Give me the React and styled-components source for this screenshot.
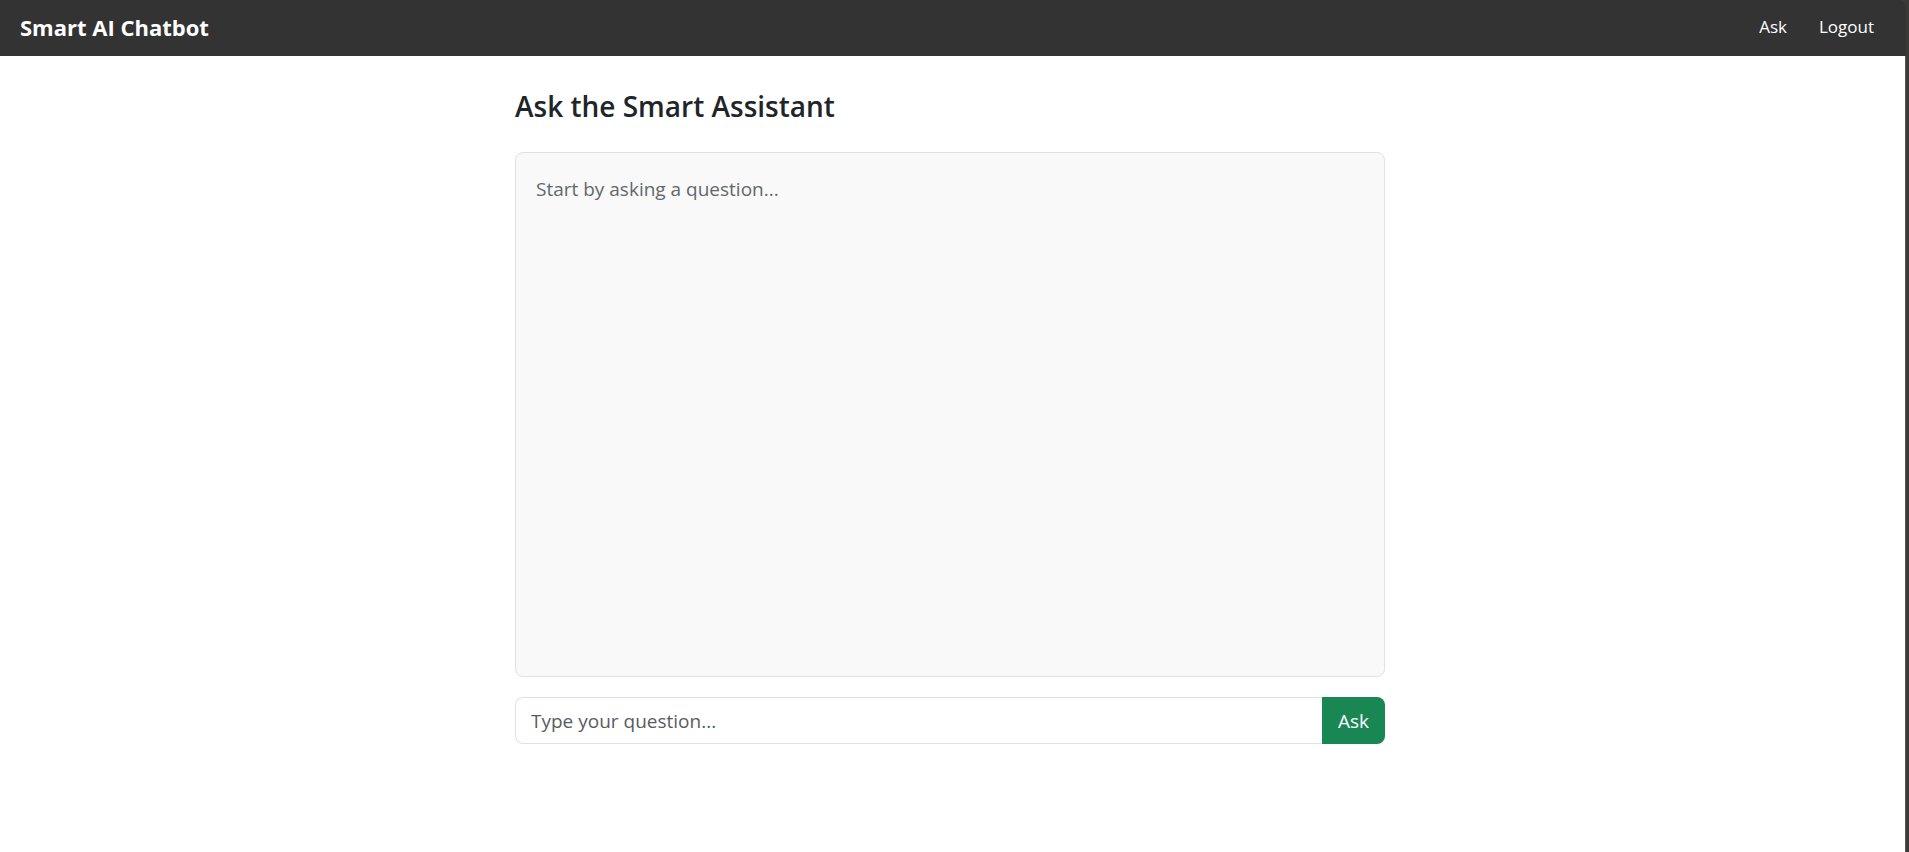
import React, { useState } from "react";
import styled, { createGlobalStyle } from "styled-components";

const GlobalStyle = createGlobalStyle`
  *, *::before, *::after { box-sizing: border-box; }
  body {
    margin: 0;
    background: #3b3a39;
    color: #212529;
    font-family: "Segoe UI", "Open Sans", "Noto Sans", sans-serif;
    font-size: 19px;
    line-height: 32px;
  }
`;

const Shell = styled.div`
  display: flex;
  flex-direction: column;
  min-height: 100vh;
  margin-right: 3px;
`;

const Navbar = styled.header`
  display: flex;
  align-items: center;
  justify-content: space-between;
  height: 56px;
  padding: 0 32px 2px 20px;
  border-top-right-radius: 8px;
  background: #333333;
`;

const Brand = styled.div`
  color: #ffffff;
  font-size: 22px;
  font-weight: 700;
`;

const NavLinks = styled.nav`
  display: flex;
  gap: 32px;
`;

const NavLink = styled.a`
  color: #ffffff;
  font-size: 17px;
  text-decoration: none;
`;

const Page = styled.main`
  flex: 1;
  padding: 32px 25px 32px 20px;
  border-right: 1px solid #5a5a5a;
  background: #ffffff;
`;

const Content = styled.div`
  max-width: 870px;
  margin: 0 auto;
`;

const Heading = styled.h1`
  margin: 0 0 28px;
  font-size: 28px;
  font-weight: 600;
  line-height: 36px;
`;

const ChatBox = styled.section`
  height: 525px;
  margin-bottom: 20px;
  padding: 20px;
  overflow-y: auto;
  border: 1px solid #dee2e6;
  border-radius: 8px;
  background: #f9f9f9;
`;

const Hint = styled.p`
  margin: 0;
  color: #63676b;
`;

const AskForm = styled.form`
  display: flex;
  height: 47px;
`;

const QuestionInput = styled.input`
  flex: 1;
  min-width: 0;
  padding: 0 15px;
  border: 1px solid #dee2e6;
  border-right: 0;
  border-radius: 8px 0 0 8px;
  background: #ffffff;
  color: #212529;
  font: inherit;

  &::placeholder {
    color: #595c5f;
    opacity: 1;
  }
`;

const AskButton = styled.button`
  padding: 0 16px;
  border: 0;
  border-radius: 0 8px 8px 0;
  background: #198754;
  color: #ffffff;
  font: inherit;
  cursor: pointer;
`;

export default function App() {
  const [question, setQuestion] = useState("");

  return (
    <>
      <GlobalStyle />
      <Shell>
        <Navbar>
          <Brand>Smart AI Chatbot</Brand>
          <NavLinks>
            <NavLink href="#ask">Ask</NavLink>
            <NavLink href="#logout">Logout</NavLink>
          </NavLinks>
        </Navbar>
        <Page>
          <Content>
            <Heading>Ask the Smart Assistant</Heading>
            <ChatBox>
              <Hint>Start by asking a question...</Hint>
            </ChatBox>
            <AskForm onSubmit={(event) => event.preventDefault()}>
              <QuestionInput
                type="text"
                aria-label="Your question"
                placeholder="Type your question..."
                value={question}
                onChange={(event) => setQuestion(event.target.value)}
              />
              <AskButton type="submit">Ask</AskButton>
            </AskForm>
          </Content>
        </Page>
      </Shell>
    </>
  );
}
